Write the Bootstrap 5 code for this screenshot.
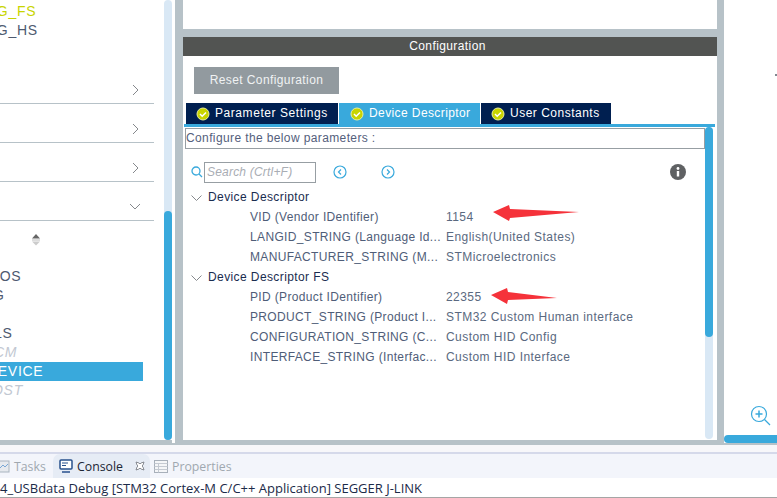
<!DOCTYPE html>
<html><head><meta charset="utf-8">
<link href="https://cdn.jsdelivr.net/npm/bootstrap@5.3.0/dist/css/bootstrap.min.css" rel="stylesheet">
<style>
html,body{margin:0;width:777px;height:498px;overflow:hidden;background:#fff}
body{font-family:"Liberation Sans",Arial,sans-serif;font-size:12px;color:#54627a}
.shell{width:777px;height:498px}
.upper{height:443px;background:#b7c2c8}
.leftpane{width:172px;height:440px;background:#fff}
.leftlist{width:164px;height:440px;position:relative;overflow:hidden}
.pick{height:19px;line-height:19px;font-size:14px;letter-spacing:.7px;white-space:nowrap;color:#4e5a70}
.pick-first{padding-top:2px;height:21px}
.lime{color:#c8d400}
.rowsep{width:154px;height:39px;border-bottom:1px solid #b7c2c8;padding-right:15px;padding-top:12px}
.rowsep-down{padding-right:13px;padding-top:11px}
.gaprow{height:25px}
.chev{display:block}
.sorter{height:36px;padding-left:31px;padding-top:13px}
.spacer{height:10px}
.mw{width:143px}
.lt{color:#c2c8d2;font-style:italic}
.sel{background:#39a9dc;color:#fff}
.clip-a{margin-left:-24px}
.clip-b{margin-left:-60px}
.clip-c{margin-left:-27px}
.clip-d{margin-left:-6px}
.clip-e{margin-left:-13px}
.clip-f{margin-left:-8px}
.vtrack{width:8px;background:#d9e8f5;border-radius:4px}
.vthumb{background:#39a9dc;border-radius:4px}
.lthumb{margin-top:211px;height:229px}
.whitegap{width:3px;height:443px;background:#fff}
.center{width:534px;margin-left:8px;margin-right:7px;height:440px;background:#fff}
.topstrip{height:29px;background:#fff}
.band{height:8px;background:#b7c2c8}
.headbar{height:19px;line-height:19px;background:#525452;color:#fff;text-align:center;font-size:12px;letter-spacing:.4px;padding-right:5px}
.resetbtn{margin:11px 0 0 11px;width:145px;height:27px;background:#929a9f;color:#f0f2f3;font-size:12px;letter-spacing:.4px;line-height:27px;text-align:center}
.tabrow{margin:9px 0 0 3px;height:21px;gap:1px}
.tabx{height:21px;line-height:21px;color:#fff;font-size:12px;letter-spacing:.56px;background:#001f50;gap:5px}
.tabx.on{background:#39a9dc}
.t1{width:152px;padding-left:10px}
.t2{width:141px;padding-left:11px;letter-spacing:.4px}
.t3{width:130px;padding-left:10px;letter-spacing:.5px}
.tabline{height:3px;background:#39a9dc;margin-left:1px;width:531px}
.cbody{margin-left:2px;width:530px;height:313px}
.cmain{width:520px}
.confbox{height:21px;margin-top:1px;line-height:19px;border:1px solid #979ea3;font-size:12px;letter-spacing:.38px;color:#54607c}
.searchrow{height:37px;padding:9px 0 0 6px}
.sbox{width:112px;height:21px;border:1px solid #979ea3;margin-left:1px;color:#a9adb4;font-style:italic;font-size:12px;line-height:19px;padding-left:2px;letter-spacing:.2px}
.navic{margin-left:17px}
.navic2{margin-left:34px}
.infoic{margin-left:auto;margin-right:19px}
.ptree{height:20px;line-height:20px;padding-top:1px;white-space:nowrap;font-size:12px;letter-spacing:.35px}
.ghead{padding-left:6px;color:#1a2c50;letter-spacing:.4px}
.ghead svg{margin-right:6px}
.pname{width:261px;flex:none;padding-left:65px;color:#4f5d78}
.pval{color:#5a6980;letter-spacing:.45px}
.rtrack{height:312px}
.rthumb{height:210px}
.rightpane{flex:1;height:443px;background:#fff;position:relative;overflow:hidden}
.hbar{position:absolute;left:0;right:0;top:435px;height:8px;background:#39a9dc;border-radius:4px 0 0 4px}
.zoomic{position:absolute;left:26px;top:405px}
.tick{position:absolute;left:51px;top:74px;width:3px;height:2px;background:#808890}
.lowline{height:2px;background:#b7c2c8}
.lowgap{height:7px;background:#f7f7fa}
.tabsbar{height:26px;background:#f3f5fb;border-top:2px solid #d5d9ea;font-family:"Open Sans","Noto Sans",sans-serif;font-size:12.3px;color:#a0a8b0}
.vt{height:24px;line-height:24px;white-space:nowrap}
.vt span{padding-top:2px}
.vt1{width:53px;gap:3px;margin-left:-3px}
.vt2{width:97px;background:#e6ecf5;border-radius:7px 7px 0 0;color:#1c2634;padding-left:6px;gap:4px;margin-left:3px}
.vt3{padding-left:4px;gap:4px}
.conline{height:19px;line-height:19px;padding-top:1px;background:#fff;font-family:"Open Sans","Noto Sans",sans-serif;font-size:13px;color:#1b2a48;white-space:nowrap}
.conedge{height:1px;background:#a5a5a5}
.arrow{position:absolute;left:0;top:0;pointer-events:none}
</style></head>
<body>
<div class="shell d-flex flex-column position-relative">
 <div class="upper d-flex">
  <div class="leftpane d-flex">
   <div class="leftlist">
    <div class="pick pick-first lime"><span class="clip-a">OTG_FS</span></div>
    <div class="pick"><span class="clip-a">OTG_HS</span></div>
    <div class="gaprow"></div>
    <div class="rowsep d-flex justify-content-end align-items-center"><svg class="chev" width="7" height="12" viewBox="0 0 7 12"><path d="M1 1l5 5-5 5" fill="none" stroke="#85888c"/></svg></div>
    <div class="rowsep d-flex justify-content-end align-items-center"><svg class="chev" width="7" height="12" viewBox="0 0 7 12"><path d="M1 1l5 5-5 5" fill="none" stroke="#85888c"/></svg></div>
    <div class="rowsep d-flex justify-content-end align-items-center"><svg class="chev" width="7" height="12" viewBox="0 0 7 12"><path d="M1 1l5 5-5 5" fill="none" stroke="#85888c"/></svg></div>
    <div class="rowsep rowsep-down d-flex justify-content-end align-items-center"><svg class="chev" width="12" height="7" viewBox="0 0 12 7"><path d="M1 1l5 5 5-5" fill="none" stroke="#85888c"/></svg></div>
    <div class="sorter"><svg class="chev" width="10" height="12" viewBox="0 0 10 12"><path d="M5 0l4 4.500H1z" fill="#666"/><rect x="1" y="5.500" width="8" height="1" fill="#bbb"/><path d="M5 11.500l-4-4h8z" fill="#ccc"/></svg></div>
    <div class="spacer"></div>
    <div class="pick mw"><span class="clip-b">FREERTOS</span></div>
    <div class="pick"><span class="clip-c">LOG</span></div>
    <div class="pick"></div>
    <div class="pick"><span class="clip-d">LS</span></div>
    <div class="pick lt"><span class="clip-d">CM</span></div>
    <div class="pick mw sel"><span class="clip-e">DEVICE</span></div>
    <div class="pick lt"><span class="clip-f">OST</span></div>
   </div>
   <div class="vtrack"><div class="vthumb lthumb"></div></div>
  </div>
  <div class="whitegap"></div>
  <div class="center">
   <div class="topstrip"></div>
   <div class="band"></div>
   <div class="headbar">Configuration</div>
   <div class="resetbtn">Reset Configuration</div>
   <div class="tabrow d-flex">
    <div class="tabx t1 d-flex align-items-center"><svg width="14" height="14" viewBox="0 0 14 14"><circle cx="7" cy="7" r="6" fill="#c8d400" stroke="#e9ee9a"/><path d="M4 7l2.200 2.200L10 5.500" stroke="#fff" stroke-width="1.500" fill="none"/></svg><span>Parameter Settings</span></div>
    <div class="tabx t2 on d-flex align-items-center"><svg width="14" height="14" viewBox="0 0 14 14"><circle cx="7" cy="7" r="6" fill="#c8d400" stroke="#e9ee9a"/><path d="M4 7l2.200 2.200L10 5.500" stroke="#fff" stroke-width="1.500" fill="none"/></svg><span>Device Descriptor</span></div>
    <div class="tabx t3 d-flex align-items-center"><svg width="14" height="14" viewBox="0 0 14 14"><circle cx="7" cy="7" r="6" fill="#c8d400" stroke="#e9ee9a"/><path d="M4 7l2.200 2.200L10 5.500" stroke="#fff" stroke-width="1.500" fill="none"/></svg><span>User Constants</span></div>
   </div>
   <div class="tabline"></div>
   <div class="cbody d-flex">
    <div class="cmain">
     <div class="confbox">Configure the below parameters :</div>
     <div class="searchrow d-flex align-items-center">
      <svg width="12" height="13" viewBox="0 0 12 13"><circle cx="5" cy="5" r="4" fill="none" stroke="#39a9dc" stroke-width="1.300"/><path d="M8 8l3 3" stroke="#39a9dc" stroke-width="1.300"/></svg>
      <div class="sbox">Search (Crtl+F)</div>
      <svg class="navic" width="14" height="14" viewBox="0 0 14 14"><circle cx="7" cy="7" r="6" fill="none" stroke="#39a9dc" stroke-width="1.200"/><path d="M8 4.500L5.500 7 8 9.500" fill="none" stroke="#39a9dc" stroke-width="1.200"/></svg>
      <svg class="navic2" width="14" height="14" viewBox="0 0 14 14"><circle cx="7" cy="7" r="6" fill="none" stroke="#39a9dc" stroke-width="1.200"/><path d="M6 4.500L8.500 7 6 9.500" fill="none" stroke="#39a9dc" stroke-width="1.200"/></svg>
      <svg class="infoic" width="16" height="16" viewBox="0 0 16 16"><circle cx="8" cy="8" r="8" fill="#5f6163"/><rect x="6.800" y="7" width="2.400" height="5.500" fill="#fff"/><circle cx="8" cy="4.500" r="1.400" fill="#fff"/></svg>
     </div>
     <div class="ptree ghead"><svg width="11" height="6" viewBox="0 0 11 6"><path d="M.5.500l5 5 5-5" fill="none" stroke="#85888c"/></svg>Device Descriptor</div>
     <div class="ptree d-flex"><div class="pname">VID (Vendor IDentifier)</div><div class="pval">1154</div></div>
     <div class="ptree d-flex"><div class="pname">LANGID_STRING (Language Id...</div><div class="pval">English(United States)</div></div>
     <div class="ptree d-flex"><div class="pname">MANUFACTURER_STRING (M...</div><div class="pval">STMicroelectronics</div></div>
     <div class="ptree ghead"><svg width="11" height="6" viewBox="0 0 11 6"><path d="M.5.500l5 5 5-5" fill="none" stroke="#85888c"/></svg>Device Descriptor FS</div>
     <div class="ptree d-flex"><div class="pname">PID (Product IDentifier)</div><div class="pval">22355</div></div>
     <div class="ptree d-flex"><div class="pname">PRODUCT_STRING (Product I...</div><div class="pval">STM32 Custom Human interface</div></div>
     <div class="ptree d-flex"><div class="pname">CONFIGURATION_STRING (C...</div><div class="pval">Custom HID Config</div></div>
     <div class="ptree d-flex"><div class="pname">INTERFACE_STRING (Interfac...</div><div class="pval">Custom HID Interface</div></div>
    </div>
    <div class="vtrack rtrack"><div class="vthumb rthumb"></div></div>
   </div>
  </div>
  <div class="rightpane">
   <div class="tick"></div>
   <svg class="zoomic" width="21" height="21" viewBox="0 0 21 21"><circle cx="9" cy="9" r="7.500" fill="none" stroke="#39a9dc" stroke-width="1.200"/><path d="M9 5.500v7M5.500 9h7" stroke="#39a9dc" stroke-width="1.500"/><path d="M14.500 14.500l5.500 5.500" stroke="#39a9dc" stroke-width="1.300"/></svg>
   <div class="hbar"></div>
  </div>
 </div>
 <div class="lowline"></div>
 <div class="lowgap"></div>
 <div class="tabsbar d-flex">
  <div class="vt vt1 d-flex align-items-center"><svg width="14" height="14" viewBox="0 0 14 14"><rect x="1" y="2" width="11" height="11" fill="#e6e9ee" stroke="#a9b4bf"/><path d="M3 9l3-3 2 2 3-3" stroke="#7aa7d6" fill="none"/></svg><span>Tasks</span></div>
  <div class="vt vt2 d-flex align-items-center"><svg width="14" height="14" viewBox="0 0 14 14"><rect x="1" y="1" width="12" height="9" rx="1" fill="#fff" stroke="#27508c" stroke-width="1.500"/><path d="M3 4h6M3 6.500h4" stroke="#27508c"/><path d="M3 13h8" stroke="#27508c" stroke-width="1.500"/></svg><span>Console</span><svg class="ms-2" width="10" height="10" viewBox="0 0 10 10"><path d="M1 1l3 1 1 1 1-1 3-1-1 3-1 1 1 1 1 3-3-1-1-1-1 1-3 1 1-3 1-1-1-1z" fill="#fff" stroke="#70757c" stroke-width=".8"/></svg></div>
  <div class="vt vt3 d-flex align-items-center"><svg width="14" height="13" viewBox="0 0 14 13"><rect x=".5" y=".5" width="13" height="12" fill="#f5f6f8" stroke="#a8b0ba"/><path d="M.5 3.500h13M.5 6.500h13M.5 9.500h13M4.500 3.500v9" stroke="#c5cad2"/></svg><span>Properties</span></div>
 </div>
 <div class="conline">4_USBdata Debug [STM32 Cortex-M C/C++ Application] SEGGER J-LINK</div>
 <div class="conedge"></div>
 <svg class="arrow" width="777" height="498" viewBox="0 0 777 498"><path d="M493 212L509 205L510 209L579 212L510 218L509 221Z" fill="#f5323a"/><path d="M491 295L507 288L508 292L557 298L508 300L507 304Z" fill="#f5323a"/></svg>
</div>
</body></html>
